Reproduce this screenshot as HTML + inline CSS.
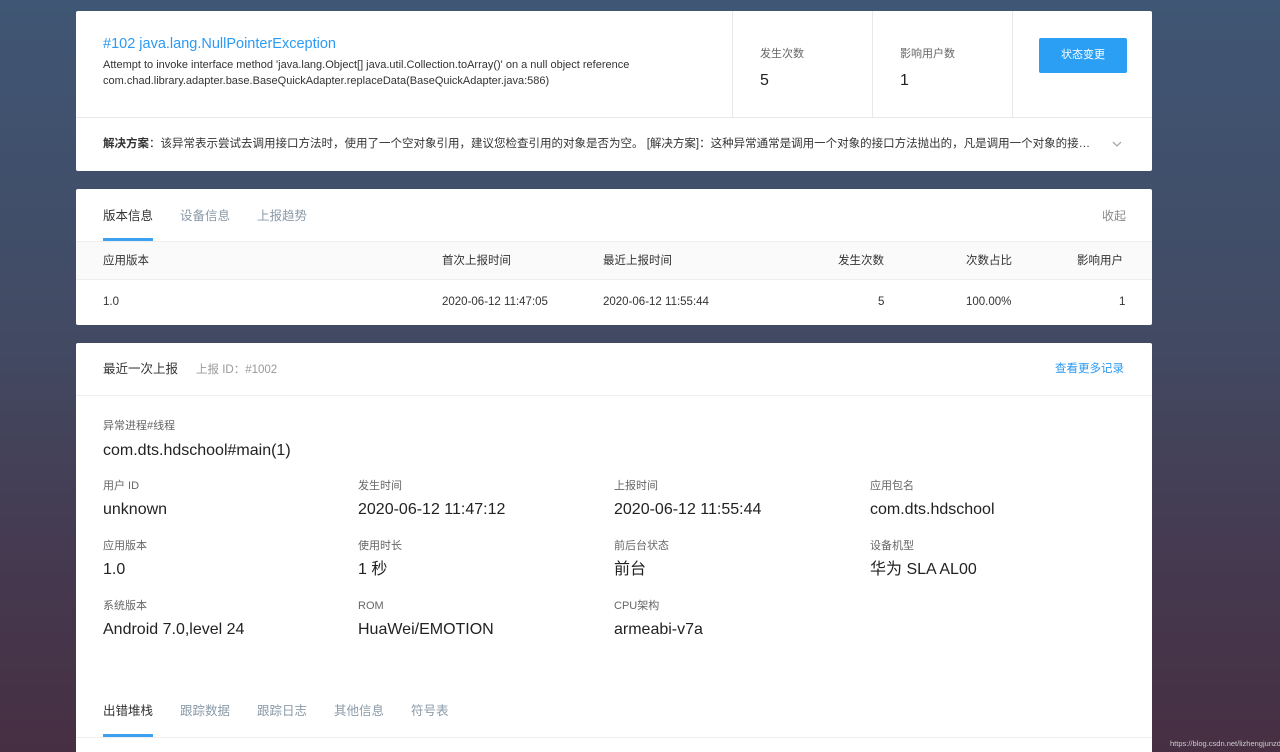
<!DOCTYPE html>
<html><head><meta charset="utf-8"><style>
*{margin:0;padding:0;box-sizing:border-box}
html,body{width:1280px;height:752px;overflow:hidden}
body{position:relative;background:linear-gradient(180deg,#3f5674 0%,#424a63 45%,#45394f 75%,#472f43 100%);font-family:"Liberation Sans","Noto Sans CJK SC",sans-serif;color:#333}
.card{position:absolute;left:76px;width:1076px;background:#fff;border-radius:2px;overflow:hidden}
.a{position:absolute;white-space:nowrap}
.lbl{font-size:11px;color:#666;line-height:14px}
.val{font-size:16px;color:#222;line-height:20px}
.gray{color:#8a9aa8}
.t{font-size:11.5px;line-height:14px}
</style></head><body>
<div class="card" style="top:11px;height:160px">
 <div class="a" style="left:27px;top:24px;font-size:14.5px;color:#2b9af3;line-height:18px">#102 java.lang.NullPointerException</div>
 <div class="a" style="left:27px;top:46px;font-size:11px;color:#333;line-height:16px">Attempt to invoke interface method 'java.lang.Object[] java.util.Collection.toArray()' on a null object reference<br>com.chad.library.adapter.base.BaseQuickAdapter.replaceData(BaseQuickAdapter.java:586)</div>
 <div class="a" style="left:656px;top:0;width:1px;height:107px;background:#e8e8e8"></div>
 <div class="a" style="left:796px;top:0;width:1px;height:107px;background:#e8e8e8"></div>
 <div class="a" style="left:936px;top:0;width:1px;height:107px;background:#e8e8e8"></div>
 <div class="a lbl" style="left:684px;top:36px">发生次数</div>
 <div class="a val" style="left:684px;top:60px">5</div>
 <div class="a lbl" style="left:824px;top:36px">影响用户数</div>
 <div class="a val" style="left:824px;top:60px">1</div>
 <div class="a" style="left:963px;top:27px;width:88px;height:35px;background:#2b9ff4;border-radius:2px;color:#fff;font-size:11px;text-align:center;line-height:35px">状态变更</div>
 <div class="a" style="left:0;top:106px;width:1076px;height:1px;background:#e8e8e8"></div>
 <div class="a t" style="left:27px;top:126px;color:#333"><b>解决方案</b>：该异常表示尝试去调用接口方法时，使用了一个空对象引用，建议您检查引用的对象是否为空。 [解决方案]：这种异常通常是调用一个对象的接口方法抛出的，凡是调用一个对象的接…</div>
 <svg class="a" style="left:1035px;top:129px" width="12" height="8"><path d="M2 2l4 4 4-4" stroke="#aaa" stroke-width="1.3" fill="none"/></svg>
</div>
<div class="card" style="top:189px;height:136px">
 <div class="a" style="left:27px;top:19px;font-size:12.5px;color:#333;line-height:16px">版本信息</div>
 <div class="a gray" style="left:104px;top:19px;font-size:12.5px;line-height:16px">设备信息</div>
 <div class="a gray" style="left:181px;top:19px;font-size:12.5px;line-height:16px">上报趋势</div>
 <div class="a" style="left:1026px;top:19px;font-size:12px;color:#888;line-height:16px">收起</div>
 <div class="a" style="left:27px;top:49px;width:50px;height:3px;background:#3aa0ef"></div>
 <div class="a" style="left:0;top:52px;width:1076px;height:39px;background:#fafafa;border-top:1px solid #eee;border-bottom:1px solid #eee"></div>
 <div class="a t" style="left:27px;top:65px">应用版本</div>
 <div class="a t" style="left:366px;top:65px">首次上报时间</div>
 <div class="a t" style="left:527px;top:65px">最近上报时间</div>
 <div class="a t" style="left:762px;top:65px">发生次数</div>
 <div class="a t" style="left:890px;top:65px">次数占比</div>
 <div class="a t" style="left:1001px;top:65px">影响用户</div>
 <div class="a t" style="left:27px;top:106px">1.0</div>
 <div class="a t" style="left:366px;top:106px">2020-06-12 11:47:05</div>
 <div class="a t" style="left:527px;top:106px">2020-06-12 11:55:44</div>
 <div class="a t" style="left:802px;top:106px">5</div>
 <div class="a t" style="left:890px;top:106px">100.00%</div>
 <div class="a t" style="left:1043px;top:106px">1</div>
</div>
<div class="card" style="top:343px;height:409px;border-radius:2px 2px 0 0">
 <div class="a" style="left:27px;top:18px;font-size:12.5px;color:#333;line-height:16px">最近一次上报</div>
 <div class="a" style="left:120px;top:19px;font-size:11.5px;color:#999;line-height:16px">上报 ID：#1002</div>
 <div class="a" style="left:979px;top:18px;font-size:11.5px;color:#2b9af3;line-height:16px">查看更多记录</div>
 <div class="a" style="left:0;top:52px;width:1076px;height:1px;background:#eee"></div>
 <div class="a lbl" style="left:27px;top:76px">异常进程#线程</div>
 <div class="a val" style="left:27px;top:98px">com.dts.hdschool#main(1)</div>

 <div class="a lbl" style="left:27px;top:136px">用户 ID</div>
 <div class="a val" style="left:27px;top:157px">unknown</div>
 <div class="a lbl" style="left:282px;top:136px">发生时间</div>
 <div class="a val" style="left:282px;top:157px">2020-06-12 11:47:12</div>
 <div class="a lbl" style="left:538px;top:136px">上报时间</div>
 <div class="a val" style="left:538px;top:157px">2020-06-12 11:55:44</div>
 <div class="a lbl" style="left:794px;top:136px">应用包名</div>
 <div class="a val" style="left:794px;top:157px">com.dts.hdschool</div>

 <div class="a lbl" style="left:27px;top:196px">应用版本</div>
 <div class="a val" style="left:27px;top:217px">1.0</div>
 <div class="a lbl" style="left:282px;top:196px">使用时长</div>
 <div class="a val" style="left:282px;top:217px">1 秒</div>
 <div class="a lbl" style="left:538px;top:196px">前后台状态</div>
 <div class="a val" style="left:538px;top:217px">前台</div>
 <div class="a lbl" style="left:794px;top:196px">设备机型</div>
 <div class="a val" style="left:794px;top:217px">华为 SLA AL00</div>

 <div class="a lbl" style="left:27px;top:256px">系统版本</div>
 <div class="a val" style="left:27px;top:277px">Android 7.0,level 24</div>
 <div class="a lbl" style="left:282px;top:256px">ROM</div>
 <div class="a val" style="left:282px;top:277px">HuaWei/EMOTION</div>
 <div class="a lbl" style="left:538px;top:256px">CPU架构</div>
 <div class="a val" style="left:538px;top:277px">armeabi-v7a</div>

 <div class="a" style="left:27px;top:360px;font-size:12.5px;color:#333;line-height:16px">出错堆栈</div>
 <div class="a gray" style="left:104px;top:360px;font-size:12.5px;line-height:16px">跟踪数据</div>
 <div class="a gray" style="left:181px;top:360px;font-size:12.5px;line-height:16px">跟踪日志</div>
 <div class="a gray" style="left:258px;top:360px;font-size:12.5px;line-height:16px">其他信息</div>
 <div class="a gray" style="left:335px;top:360px;font-size:12.5px;line-height:16px">符号表</div>
 <div class="a" style="left:27px;top:391px;width:50px;height:3px;background:#3aa0ef"></div>
 <div class="a" style="left:0;top:394px;width:1076px;height:1px;background:#eee"></div>
</div>
<div class="a" style="left:1170px;top:739px;font-size:7.5px;color:#ccc;line-height:10px">https://blog.csdn.net/lizhengjunzd</div>
</body></html>
